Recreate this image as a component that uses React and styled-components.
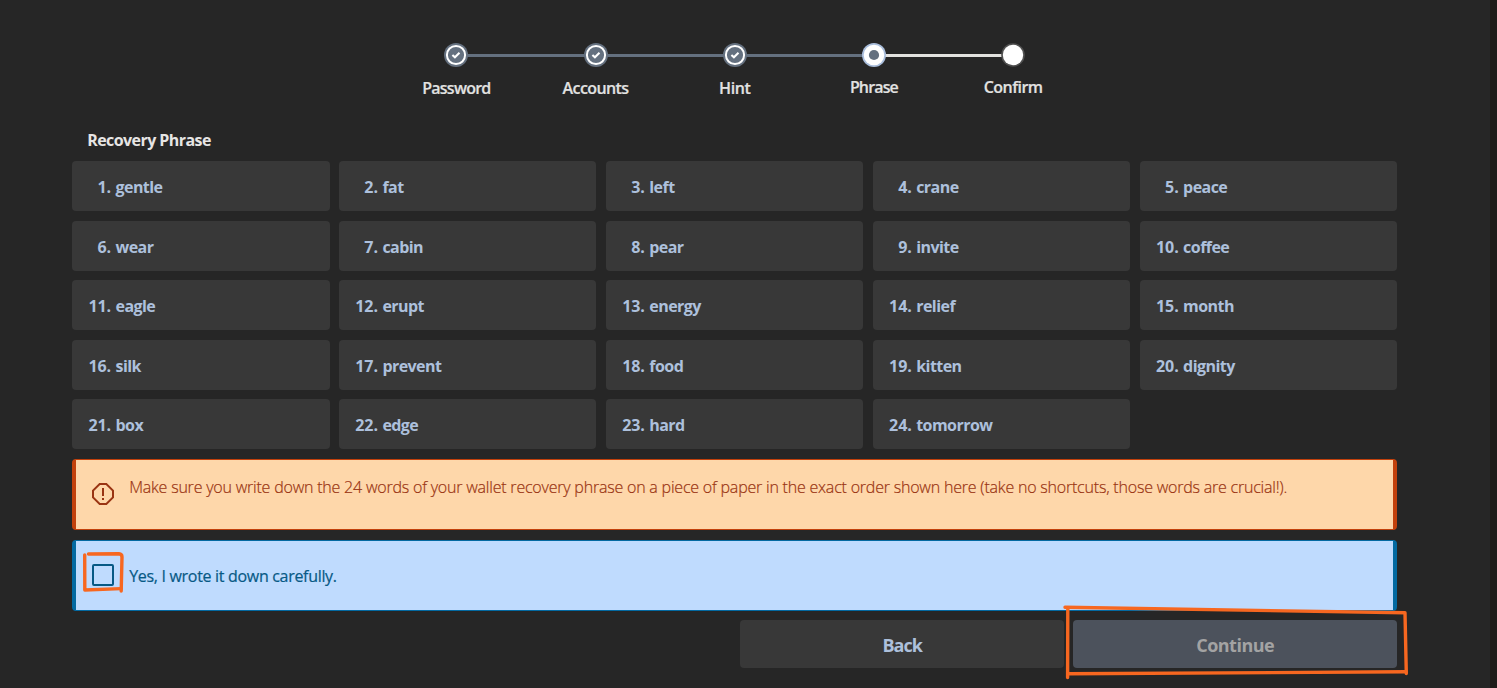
import React from "react";
import styled, { createGlobalStyle } from "styled-components";

const GlobalStyle = createGlobalStyle`
  *, *::before, *::after { box-sizing: border-box; }
  body {
    margin: 0;
    background: #262626;
    font-family: "Open Sans", "Noto Sans", sans-serif;
    overflow: hidden;
  }
`;

const Page = styled.div`
  position: relative;
  width: 100%;
  height: 688px;
  border-right: 7px solid #1f1b19;
  padding: 42px 92.8px 0 72.2px;
  background: #262626;
`;

const Stepper = styled.ol`
  display: grid;
  grid-template-columns: repeat(5, 139.2px);
  width: 696px;
  margin: 0 0 0 314.6px;
  padding: 0;
  list-style: none;
`;

const Step = styled.li`
  display: flex;
  flex-direction: column;
  align-items: center;
  height: 86px;
`;

const Track = styled.div`
  display: grid;
  grid-template-columns: 1fr 24px 1fr;
  align-items: center;
  width: 100%;
  height: 26px;
`;

const Line = styled.span`
  height: 3px;
  margin: 0 -1px;
  background: ${(p) => p.$color};
`;

const Marker = styled.svg`
  display: block;
  position: relative;
  width: 24px;
  height: 24px;
`;

const StepLabel = styled.span`
  margin-top: ${(p) => (p.$raised ? 7 : 8)}px;
  font-size: 16px;
  line-height: 24px;
  font-weight: 600;
  letter-spacing: ${(p) => p.$tracking}px;
  color: #e2e2e1;
  -webkit-text-stroke: 0.2px currentColor;
`;

const Heading = styled.h2`
  margin: 0 0 9px 15px;
  height: 24px;
  font-size: 16px;
  line-height: 24px;
  font-weight: 700;
  letter-spacing: -0.57px;
  color: #e7e5e4;
`;

const WordGrid = styled.div`
  display: grid;
  grid-template-columns: repeat(5, 1fr);
  grid-auto-rows: 50px;
  gap: 9.5px 9.5px;
`;

const WordCard = styled.div`
  display: grid;
  grid-template-columns: 38.8px 1fr;
  column-gap: 4.5px;
  align-items: center;
  padding-top: 2px;
  border-radius: 4px;
  background: #383838;
  color: #adc0dc;
  font-size: 16px;
  line-height: 24px;
  font-weight: 700;
  letter-spacing: -0.55px;
`;

const Index = styled.span`
  text-align: right;
  letter-spacing: -0.1px;
`;

const Notice = styled.div`
  display: grid;
  grid-template-columns: 24px 1fr;
  column-gap: 14px;
  align-items: center;
  height: 71px;
  margin-top: 10px;
  padding: 0 15px;
  border: solid ${(p) => p.$edge};
  border-width: 1px 4px;
  border-radius: 4px;
  background: ${(p) => p.$fill};
  color: ${(p) => p.$ink};
`;

const NoticeIcon = styled.svg`
  width: 24px;
  height: 24px;
  margin-top: -1px;
`;

const NoticeText = styled.span`
  margin-top: ${(p) => p.$shift}px;
  font-size: 16px;
  line-height: 24px;
  font-weight: ${(p) => p.$weight};
  letter-spacing: ${(p) => p.$tracking}px;
  white-space: nowrap;
  -webkit-text-stroke: 0.2px currentColor;
`;

const CheckBox = styled.button`
  width: 22px;
  height: 22px;
  margin: -2px 0 0 1px;
  padding: 0;
  border: 2px solid #075985;
  border-radius: 2px;
  background: transparent;
`;

const Actions = styled.div`
  display: flex;
  justify-content: flex-end;
  gap: 9px;
  margin-top: 9px;
`;

const Button = styled.button`
  width: 324px;
  height: 48px;
  padding: 1px 0 0;
  border: 0;
  border-radius: 4px;
  background: ${(p) => (p.$primary ? "#4c525c" : "#383838")};
  color: ${(p) => (p.$primary ? "#a3a3a3" : "#adc0dc")};
  font-family: inherit;
  font-size: 18px;
  line-height: 28px;
  font-weight: 700;
  letter-spacing: ${(p) => p.$tracking}px;
`;

const Annotations = styled.svg`
  position: absolute;
  inset: 0;
  width: 1497px;
  height: 688px;
  pointer-events: none;
`;

const LINE_DONE = "#64707f";
const LINE_TODO = "#e3e2df";

const steps = [
  { label: "Password", state: "done", tracking: -0.75 },
  { label: "Accounts", state: "done", tracking: -0.6 },
  { label: "Hint", state: "done", tracking: -0.4 },
  { label: "Phrase", state: "current", tracking: -0.85 },
  { label: "Confirm", state: "todo", tracking: -0.5 },
];

const words = [
  "gentle", "fat", "left", "crane", "peace",
  "wear", "cabin", "pear", "invite", "coffee",
  "eagle", "erupt", "energy", "relief", "month",
  "silk", "prevent", "food", "kitten", "dignity",
  "box", "edge", "hard", "tomorrow",
];

function StepMarker({ state }) {
  if (state === "done") {
    return (
      <Marker viewBox="0 0 24 24">
        <circle cx="12" cy="12" r="12" fill="#64707f" />
        <circle cx="12" cy="12" r="9.1" fill="none" stroke="#fff" strokeWidth="2" />
        <path d="M8.4 12 L10.9 14.2 L15.5 9.7" fill="none" stroke="#fff" strokeWidth="2.1" />
      </Marker>
    );
  }
  if (state === "current") {
    return (
      <Marker viewBox="0 0 24 24">
        <circle cx="12" cy="12" r="12" fill="#a9bddb" />
        <circle cx="12" cy="12" r="10.3" fill="#fff" />
        <circle cx="12" cy="12" r="5.1" fill="#64707f" />
      </Marker>
    );
  }
  return (
    <Marker viewBox="0 0 24 24">
      <circle cx="12" cy="12" r="11.8" fill="#505050" />
      <circle cx="12" cy="12" r="10.2" fill="#fff" />
    </Marker>
  );
}

const lineColor = (index) => {
  if (index < 0 || index > 3) return "transparent";
  return index < 3 ? LINE_DONE : LINE_TODO;
};

export default function App() {
  return (
    <>
      <GlobalStyle />
      <Page>
        <Stepper>
          {steps.map((step, i) => (
            <Step key={step.label}>
              <Track>
                <Line $color={lineColor(i - 1)} />
                <StepMarker state={step.state} />
                <Line $color={lineColor(i)} />
              </Track>
              <StepLabel $raised={step.state !== "done"} $tracking={step.tracking}>
                {step.label}
              </StepLabel>
            </Step>
          ))}
        </Stepper>

        <Heading>Recovery Phrase</Heading>
        <WordGrid>
          {words.map((word, i) => (
            <WordCard key={word}>
              <Index>{i + 1}.</Index>
              <span>{word}</span>
            </WordCard>
          ))}
        </WordGrid>

        <Notice $edge="#c2410c" $fill="#fed7aa" $ink="#9a3412">
          <NoticeIcon viewBox="0 0 24 24" fill="currentColor">
            <path d="M15.73 1 8.27 1 1 8.27 1 15.73 8.27 23 15.73 23 23 15.73 23 8.27ZM21 14.9 14.9 21 9.1 21 3 14.9 3 9.1 9.1 3 14.9 3 21 9.1Z" fillRule="evenodd" />
            <rect x="11" y="6" width="2" height="8" />
            <rect x="11" y="16" width="2" height="2" />
          </NoticeIcon>
          <NoticeText $weight={300} $tracking={-0.206} $shift={-15}>
            Make sure you write down the 24 words of your wallet recovery phrase on a piece of paper in the exact order shown here (take no shortcuts, those words are crucial!).
          </NoticeText>
        </Notice>

        <Notice $edge="#0369a1" $fill="#bfdbfe" $ink="#075985">
          <CheckBox role="checkbox" aria-checked="false" aria-label="Yes, I wrote it down carefully." />
          <NoticeText $weight={400} $tracking={-0.31} $shift={0}>
            Yes, I wrote it down carefully.
          </NoticeText>
        </Notice>

        <Actions>
          <Button $tracking={-1}>Back</Button>
          <Button $primary $tracking={-0.5}>Continue</Button>
        </Actions>

        <Annotations viewBox="0 0 1497 688" fill="none" stroke="#f76720" strokeWidth="3.4" strokeLinecap="round" strokeLinejoin="round">
          <path d="M88.5 554 L119 553.8 Q122 554 122 557 L121.2 591" />
          <path d="M84.7 555 L84.8 590 L121 588.6" />
          <path d="M1065 607.3 L1405 612.8 L1406.3 673.5" />
          <path d="M1067.8 608 L1067.6 677.5" />
          <path d="M1068 673.8 L1406 671.8" />
        </Annotations>
      </Page>
    </>
  );
}
